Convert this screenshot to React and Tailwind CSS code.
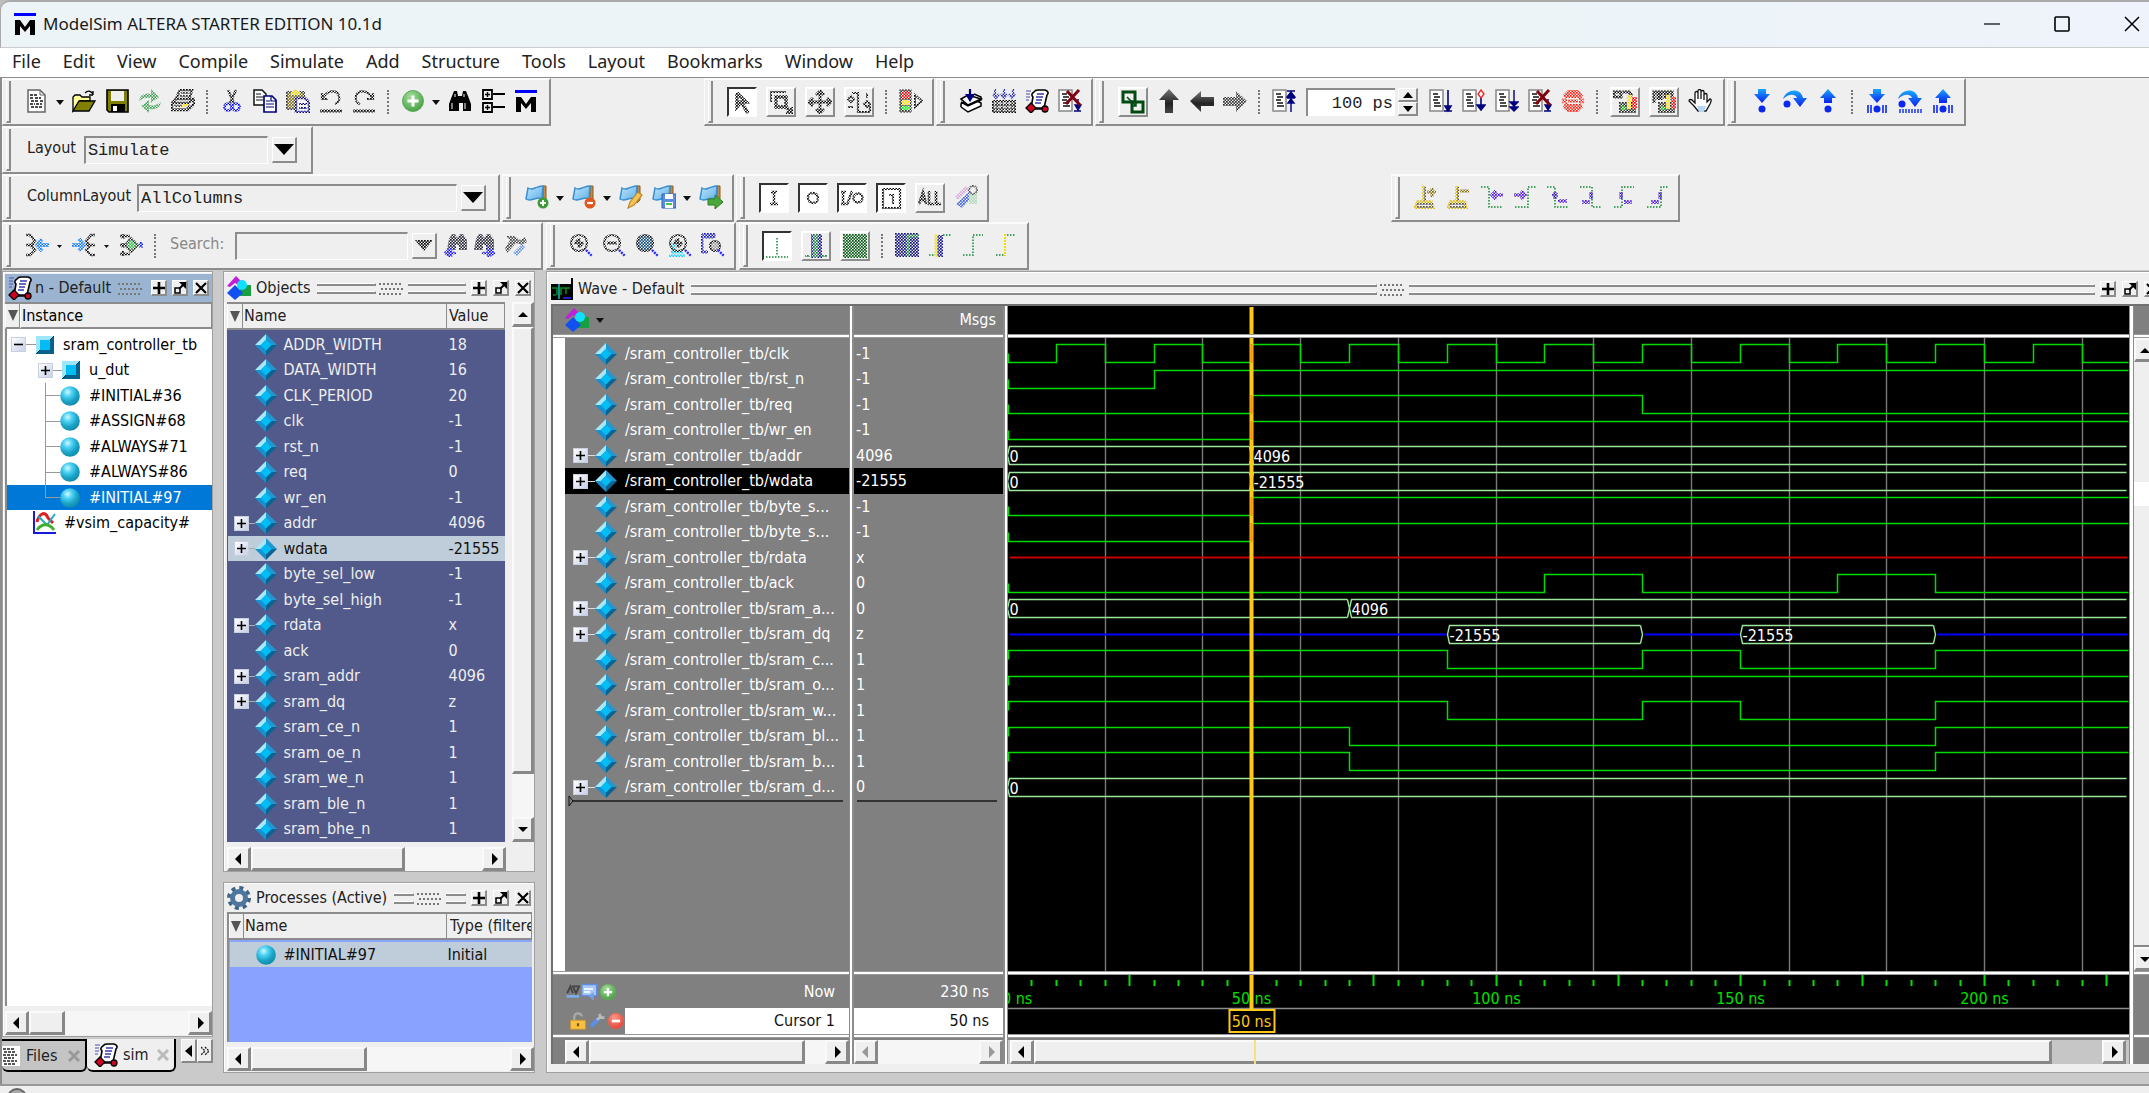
import React from "react";

/* ---------- drawing helpers ---------- */

function Defs() {
  return (
    <svg className="absolute h-0 w-0" aria-hidden="true">
      <defs>
        <pattern id="checker" width="3" height="3" patternUnits="userSpaceOnUse">
          <rect width="1.7" height="1.7" fill="#fff" />
          <rect x="1.5" y="1.5" width="1.5" height="1.5" fill="#fff" />
        </pattern>
        <mask id="stipple" maskUnits="userSpaceOnUse" x="0" y="0" width="32" height="32">
          <rect width="32" height="32" fill="url(#checker)" />
        </mask>
        <radialGradient id="ball" cx="0.38" cy="0.3" r="0.75">
          <stop offset="0" stopColor="#d4f7ff" />
          <stop offset="0.3" stopColor="#4ed3f5" />
          <stop offset="0.65" stopColor="#1ba3c6" />
          <stop offset="1" stopColor="#0f87a8" />
        </radialGradient>
        <radialGradient id="greenBall" cx="0.4" cy="0.3" r="0.8">
          <stop offset="0" stopColor="#a6dc9c" />
          <stop offset="1" stopColor="#3c9a3a" />
        </radialGradient>
        <radialGradient id="redBall" cx="0.4" cy="0.3" r="0.8">
          <stop offset="0" stopColor="#ff9a8a" />
          <stop offset="1" stopColor="#dc3a2e" />
        </radialGradient>
        <linearGradient id="flag" x1="0" y1="0" x2="1" y2="1">
          <stop offset="0" stopColor="#bfe6fc" />
          <stop offset="1" stopColor="#5fb0e8" />
        </linearGradient>
        <linearGradient id="blueArrow" x1="0" y1="0" x2="0" y2="1">
          <stop offset="0" stopColor="#1aa8ff" />
          <stop offset="1" stopColor="#0a20f0" />
        </linearGradient>
        <linearGradient id="darkArrow" x1="0" y1="0" x2="0" y2="1">
          <stop offset="0" stopColor="#777" />
          <stop offset="0.6" stopColor="#222" />
          <stop offset="1" stopColor="#444" />
        </linearGradient>
      </defs>
    </svg>
  );
}

function Svg({ children, off, w = 24, h = 24, vb }) {
  return (
    <svg width={w} height={h} viewBox={vb || "0 0 24 24"} fill="none" className="block shrink-0" aria-hidden="true">
      <g mask={off ? "url(#stipple)" : undefined}>{children}</g>
    </svg>
  );
}

const NAVY = "#00007f";

const MLogo = () => (
  <Svg>
    <rect x="1" y="1" width="22" height="3" fill="#0000ff" />
    <path d="M2 23V8h5l5 7 5-7h5v15h-5v-9l-5 6-5-6v9z" fill="#000" />
  </Svg>
);
const DocIcon = () => (
  <Svg>
    <path d="M3 1h12l5 5v17H3z" fill="#fff" stroke="#666" strokeWidth="1.5" />
    <path d="M15 1v5h5" stroke="#666" />
    <path d="M5 6h7M5 9h3m2 0h6M6 12h8m1 0h3M5 15h5m1 0h6M6 18h7m1 0h3" stroke="#111" strokeWidth="1.6" strokeDasharray="3 1" />
  </Svg>
);
const OpenIcon = () => (
  <Svg>
    <path d="M1 22V8l2-2h5l2 2h8v4H8z" fill="#ffff9c" stroke="#000" strokeWidth="1.3" />
    <path d="M1 22l6-10h16l-6 10z" fill="#808000" stroke="#000" strokeWidth="1.3" />
    <path d="M13 4c3-3 6-2 8 1m0 1V2m0 4h-4" stroke="#000" strokeWidth="1.3" />
  </Svg>
);
const SaveIcon = () => (
  <Svg>
    <path d="M2 1h21v22H4l-2-2z" fill="#808000" stroke="#000" strokeWidth="1.6" />
    <rect x="6" y="2" width="13" height="10" fill="#efefef" />
    <rect x="6" y="15" width="14" height="8" fill="#000" />
    <rect x="8" y="17" width="4" height="5" fill="#fff" />
  </Svg>
);
const RefreshIcon = () => (
  <Svg off>
    <path d="M1 12c1-6 6-9 12-7V0l8 8-8 6v-5c-5-1-8 0-12 3zM23 13c-1 6-6 8-12 7v4l-8-7 8-6v5c5 1 8 0 12-3z" fill="#3aa050" />
  </Svg>
);
const PrintIcon = () => (
  <Svg off>
    <path d="M9 1h12l-3 9H5zM5 10l-4 4v7h16l6-6v-5h-5M1 14h16v7M17 14l6-4" stroke="#000" strokeWidth="2.6" />
    <path d="M10 4h8M9 7h8M3 17h13M3 20h12" stroke="#333" strokeWidth="2" />
    <rect x="11" y="15" width="6" height="3" fill="#ffe000" />
  </Svg>
);
const CutIcon = () => (
  <Svg off>
    <path d="M8 1l6 13M16 1l-6 13" stroke="#000" strokeWidth="2.4" />
    <circle cx="8" cy="18" r="3.5" stroke="#0000ff" strokeWidth="2.6" />
    <circle cx="16" cy="18" r="3.5" stroke="#0000ff" strokeWidth="2.6" />
  </Svg>
);
const CopyIcon = () => (
  <Svg>
    <path d="M1 1h8l4 4v11H1z" fill="#fff" stroke="#111" strokeWidth="1.5" />
    <path d="M3 5h5M3 8h7M3 11h7" stroke="#111" strokeWidth="1.2" />
    <path d="M11 7h8l4 4v12H11z" fill="#fff" stroke={NAVY} strokeWidth="1.7" />
    <path d="M18 7v5h5M13 12h4M13 15h8M13 18h8" stroke={NAVY} strokeWidth="1.2" />
  </Svg>
);
const PasteIcon = () => (
  <Svg off>
    <path d="M1 3h17v17H1z" fill="#7a6a10" stroke="#333" strokeWidth="2" />
    <path d="M5 3l4-3 5 3v3H5z" fill="#e8e000" />
    <path d="M10 9h9l4 4v10H10z" fill="#fff" stroke={NAVY} strokeWidth="2.6" />
    <path d="M13 15h8M13 19h8" stroke={NAVY} strokeWidth="2" />
  </Svg>
);
const UndoIcon = () => (
  <Svg off>
    <path d="M3 4v6h6M4 9c4-8 14-9 16-2 1 4-1 7-4 8" stroke="#000" strokeWidth="2.2" />
    <path d="M1 22h22" stroke="#000" strokeWidth="3" />
  </Svg>
);
const RedoIcon = () => (
  <Svg off>
    <path d="M21 4v6h-6M20 9C16 1 6 0 4 7c-1 4 1 7 4 8" stroke="#000" strokeWidth="2.2" />
    <path d="M1 22h22" stroke="#000" strokeWidth="3" />
  </Svg>
);
const AddBall = ({ s = 24 }) => (
  <Svg w={s} h={s}>
    <circle cx="12" cy="12" r="10.5" fill="url(#greenBall)" stroke="#5fae5a" />
    <path d="M12 6.500v11M6.500 12h11" stroke="#fff" strokeWidth="3" />
  </Svg>
);
const RemoveBall = ({ s = 18 }) => (
  <Svg w={s} h={s}>
    <circle cx="12" cy="12" r="10.500" fill="url(#redBall)" stroke="#e0655a" />
    <path d="M6.500 12h11" stroke="#fff" strokeWidth="3.500" />
  </Svg>
);
const FindIcon = () => (
  <Svg>
    <path d="M4 7l2-5h3l1 5h4l1-5h3l2 5 3 8v7h-8v-8h-4v8H1v-7z" fill="#000" />
    <path d="M4 14v6M7 5v3M17 14v6M16 5v3" stroke="#fff" strokeWidth="1" />
  </Svg>
);
const TreeIcon = () => (
  <Svg>
    <path d="M2 1h9v9H2zM2 14h9v9H2zM12 5h12M12 18h12" stroke="#000" strokeWidth="1.8" />
    <path d="M6.500 3v5M4 5.500h5M6.500 16v5M4 18.500h5" stroke="#000" strokeWidth="1.4" />
  </Svg>
);
const PointerIcon = () => (
  <Svg off>
    <path d="M7 3l9 9h-5l7 11M7 3v14l4-5" stroke="#000" strokeWidth="3.400" />
  </Svg>
);
const ZoomBoxIcon = () => (
  <Svg off>
    <path d="M2 12V2h15" stroke="#000" strokeWidth="2" />
    <path d="M7 7h10v10H7zM16 16l7 7m0-6v6h-6" stroke="#000" strokeWidth="3.400" />
  </Svg>
);
const PanIcon = () => (
  <Svg off>
    <path d="M12 1v22M1 12h22M8 5l4-4 4 4M8 19l4 4 4-4M5 8l-4 4 4 4M19 8l4 4-4 4" stroke="#000" strokeWidth="2.800" />
  </Svg>
);
const EditWaveIcon = () => (
  <Svg off>
    <path d="M5 3h6v19h12M23 22v-6" stroke="#000" strokeWidth="2.200" />
    <path d="M1 9l3-3 3 3-3 3zM17 14l3-3 3 3-3 3zM1 17h5M20 3v5" stroke="#000" strokeWidth="2" />
  </Svg>
);
const TrafficIcon = () => (
  <Svg off>
    <rect x="1" y="1" width="11" height="22" fill="#333" stroke="#000" />
    <rect x="3" y="2" width="8" height="8" fill="#ff0000" />
    <rect x="3" y="11" width="8" height="5" fill="#ffe000" />
    <rect x="3" y="17" width="8" height="4" fill="#00ff00" />
    <path d="M16 6v12l7-6z" stroke="#000" strokeWidth="2" />
  </Svg>
);
const CompileIcon = () => (
  <Svg>
    <path d="M2 18l7 5 13-6v-3l-8-4M2 18v-3l6-4M2 13l7 4 13-6V8l-7-3" fill="#fff" stroke="#000" strokeWidth="1.500" />
    <path d="M2 10l7-4 13 4-13 6z" fill="#fff" stroke="#000" strokeWidth="1.500" />
    <path d="M11 0v9M8 6l3 5 3-5z" stroke={NAVY} fill={NAVY} strokeWidth="2.200" />
  </Svg>
);
const CompileAllIcon = () => (
  <Svg off>
    <path d="M3 0v7M12 0v7M21 0v7M1 5l3 4 3-4M9 5l3 4 3-4M17 5l3 4 3-4" stroke="#2020c0" strokeWidth="2.200" />
    <path d="M1 12h22v11H1z" fill="#aaa" stroke="#000" strokeWidth="2" />
    <path d="M1 16h22M1 20h22M5 12v11M10 12v11M15 12v11M20 12v11" stroke="#000" strokeWidth="1.500" />
  </Svg>
);
const SimIcon = ({ s = 24 }) => (
  <Svg w={s} h={s}>
    <path d="M1 2h5M1 5h4M1 8h4M1 11h3" stroke="#5050b0" strokeWidth="1" />
    <path d="M9 3c1-2 2-2 4-2h7c3 1 4 3 2 5l-3 13H6L8 8C6 6 7 4 9 3z" fill="#fff" stroke="#000" strokeWidth="1.600" />
    <path d="M12 5h7M11 8h7M11 11h6M10 14h6" stroke="#3838a8" strokeWidth="1.400" />
    <path d="M1 19l5-5 5 5-5 5z" fill="#d00020" stroke="#000" strokeWidth="1.300" />
    <circle cx="20" cy="20" r="3" fill="#d00020" stroke="#000" strokeWidth="1.300" />
    <path d="M10 20h7" stroke="#000" strokeWidth="1.500" />
  </Svg>
);
const StepDoc = ({ children }) => (
  <Svg>
    <path d="M1 1h13v21H1z" fill="#fff" stroke="#888" strokeWidth="1.500" />
    <path d="M4 5h5M5 8h6M4 11h5M5 14h6M5 17h7" stroke="#111" strokeWidth="1.500" />
    {children}
  </Svg>
);
const RestartIcon = () => (
  <StepDoc>
    <path d="M19 23V3M15 2h8M15 9h8M15 8l4-5 4 5zM16 14l3-4 3 4z" stroke={NAVY} fill={NAVY} strokeWidth="1.400" />
  </StepDoc>
);
const RunIcon = () => (
  <StepDoc>
    <path d="M19 1v18M15 22h8M16 17l3 5 3-5z" stroke={NAVY} fill={NAVY} strokeWidth="1.600" />
  </StepDoc>
);
const ContinueIcon = () => (
  <StepDoc>
    <path d="M19 8v12M15 16l4 5 4-5z" stroke={NAVY} fill={NAVY} strokeWidth="1.600" />
    <path d="M19 1l3 4-3 4-3-4z" stroke="#f02020" strokeWidth="1.300" fill="#fff" />
  </StepDoc>
);
const RunAllIcon = () => (
  <StepDoc>
    <path d="M19 1v20M15 13l4 4 4-4zM15 18l4 4 4-4z" stroke={NAVY} fill={NAVY} strokeWidth="1.400" />
  </StepDoc>
);
const BreakIcon = () => (
  <StepDoc>
    <path d="M20 10v10M16 22h7M17 16l3 5 3-5z" stroke={NAVY} fill={NAVY} strokeWidth="1.400" />
    <path d="M9 2l13 14M21 1L8 15" stroke="#800010" strokeWidth="3" />
  </StepDoc>
);
const StopIcon = () => (
  <Svg off>
    <path d="M7 1h10l5 5-3 6 3 6-5 5H7l-5-5 3-6-3-6z" fill="#ff2010" />
    <path d="M6 9h12v6H6z" fill="#efefef" />
    <path d="M1 10l3 2-3 2M23 10l-3 2 3 2" stroke="#ff2010" strokeWidth="2" />
    <path d="M7 12h10M12 4v4M12 16v4" stroke="#ff2010" strokeWidth="3" />
  </Svg>
);
const CascadeIcon = () => (
  <Svg>
    <path d="M2 2h12v10H2z" stroke="#004b12" strokeWidth="3" />
    <path d="M11 12h11v10H11z" stroke="#004b12" strokeWidth="3" />
    <path d="M6 7l9 9m0-5v5h-5" stroke="#004b12" strokeWidth="1.500" />
  </Svg>
);
const UpArrow = () => (
  <Svg><path d="M12 0l10 11h-6v13H8V11H2z" fill="url(#darkArrow)" /></Svg>
);
const LeftArrow = () => (
  <Svg><path d="M0 12L11 2v6h13v9H11v6z" fill="url(#darkArrow)" /></Svg>
);
const RightArrowOff = () => (
  <Svg off><path d="M24 12L13 2v6H0v9h13v6z" fill="#333" /></Svg>
);
const ProfileIcon = ({ m }) => (
  <Svg off>
    <path d={m ? "M2 13V2h4v8m3 0V2h4v7m3 0V2h4v8" : "M1 8V2h7v5H2m8-5h6l3 4"} stroke="#000" strokeWidth="3" />
    <path d="M6 12h17v11H6z" fill="#222" />
    <path d="M14 5h4v14h-4z" fill="#ffe000" />
    <path d="M19 7h5v12h-5z" fill="#ff0000" />
    <path d="M9 15l5 4-5 2z" fill="#00d000" />
  </Svg>
);
const HandIcon = () => (
  <Svg>
    <path d="M7 14V4c0-2 3-2 3 0v6V2c0-2 3-2 3 0v8V3c0-2 3-2 3 0v8V6c0-2 3-2 3 0v7l3-3c2 0 1 3 0 5l-4 7H10l-4-5-5-5c0-2 3-2 4 0z" fill="#fff" stroke="#111" strokeWidth="1.300" />
    <path d="M9 17h9l-2 6h-5z" fill="#b8d4f4" />
  </Svg>
);
const StepDown = ({ bars }) => (
  <Svg>
    <path d="M8 0h8v5h4l-8 9-8-9h4z" fill="url(#blueArrow)" />
    <circle cx="12" cy="20" r="3.500" fill="#0a28f0" />
    {bars && <path d="M3 16v8M6 16v8M18 16v8M21 16v8" stroke="#0a28f0" strokeWidth="1.600" />}
  </Svg>
);
const StepUp = ({ bars }) => (
  <Svg>
    <path d="M8 14h8V9h4l-8-9-8 9h4z" fill="url(#blueArrow)" />
    <circle cx="12" cy="20" r="3.500" fill="#0a28f0" />
    {bars && <path d="M3 16v8M6 16v8M18 16v8M21 16v8" stroke="#0a28f0" strokeWidth="1.600" />}
  </Svg>
);
const StepOver = ({ bars }) => (
  <Svg>
    <path d="M0 10C4-1 18-1 20 9h4l-7 9-7-9h4C12 4 5 5 0 10z" fill="url(#blueArrow)" />
    <circle cx="4" cy="15" r="3.500" fill="#0a28f0" />
    {bars && <path d="M2 20v4M5 20v4M8 20v4M11 20v4M14 20v4M17 20v4M20 20v4M23 20v4" stroke="#0a28f0" strokeWidth="1.400" />}
  </Svg>
);
const FlagIcon = ({ kind }) => (
  <Svg>
    <path d="M18 1h3v14l-3 3z" fill="#c08a48" stroke="#8a5c20" />
    <path d="M3 3c3 2 4 1 7 0s5-2 8-2l-1 12c-3 0-5 0-8 1s-5 2-8 0z" fill="url(#flag)" stroke="#3a8fd0" strokeWidth="1.500" />
    {kind === "add" && <g><circle cx="18" cy="18" r="5.500" fill="#3d9a38" /><path d="M18 15v6M15 18h6" stroke="#fff" strokeWidth="2" /></g>}
    {kind === "remove" && <g><circle cx="18" cy="18" r="5.500" fill="#e0561e" /><path d="M15 18h6" stroke="#fff" strokeWidth="2.200" /></g>}
    {kind === "edit" && <path d="M9 23l2-6 8-10 4 3-8 10z" fill="#f4c552" stroke="#c0862a" strokeWidth="1.200" />}
    {kind === "save" && <g><path d="M10 9h14v14H10z" fill="#5b8ee0" stroke="#2f5fb8" /><path d="M13 9h8v5h-8zM13 17h8v6h-8z" fill="#fff" /><path d="M14 19h6" stroke="#4ac04a" strokeWidth="2" /></g>}
    {kind === "go" && <path d="M9 14h7v-4l8 7-8 7v-4H9z" fill="#4aa83a" stroke="#2d7f22" />}
  </Svg>
);
const GlyphI = () => <Svg off><path d="M9 6h6M12 6v12M8 18h8" stroke="#000" strokeWidth="2.400" /></Svg>;
const GlyphO = () => <Svg off><circle cx="12" cy="12" r="5" stroke="#000" strokeWidth="2.400" /></Svg>;
const GlyphIO = () => <Svg off><path d="M1 6h5M3 6v12M1 18h5M7 19l5-14" stroke="#000" strokeWidth="2.400" /><circle cx="18" cy="12" r="4.500" stroke="#000" strokeWidth="2.400" /></Svg>;
const GlyphBox = () => <Svg off><path d="M4 3h17v19H4zM10 9h4v9" stroke="#000" strokeWidth="2.200" /></Svg>;
const GlyphAll = () => <Svg off><path d="M1 18l4-12 3 12M2 14h6M11 5v13h5M18 5v13h5" stroke="#000" strokeWidth="2.600" /></Svg>;
const BrushIcon = () => (
  <Svg off>
    <path d="M1 12L12 1l3 3L4 15z" fill="#d8a0d8" />
    <path d="M2 19l14-13 4 4L8 23z" fill="#3a5fe0" />
    <path d="M15 9h8v10h-8z" fill="#a8d8b0" />
    <circle cx="19" cy="5" r="4" stroke="#444" strokeWidth="2" />
  </Svg>
);
const WrenchOff = () => (
  <Svg off>
    <path d="M2 3h8l6 4 5-3 2 5-5 3-6-2-9 10-2-5 5-8z" fill="#444" />
    <path d="M9 20l9-9 3 3-8 9z" fill="#5a8fe8" />
  </Svg>
);
const CursorAdd = ({ plus }) => (
  <Svg off>
    <path d="M10 1v15M1 23h18l-2-6H4z" stroke="#e0b800" strokeWidth="3.600" />
    <path d="M2 19h17M3 22h16M11 2v14" stroke="#333" strokeWidth="1.500" />
    <path d={plus ? "M13 7h9M18 3v9" : "M13 6h9"} stroke="#806a00" strokeWidth="3" />
  </Svg>
);
const EdgeIcon = ({ d, arrow }) => (
  <Svg>
    <path d={d} stroke="#118833" strokeWidth="1.500" strokeDasharray="1.500 1.500" />
    <g mask="url(#stipple)"><path d={arrow} stroke="#4a10e0" strokeWidth="3.400" /></g>
  </Svg>
);
const JoinIcon = ({ kind }) => (
  <Svg off>
    {kind === "in" && <path d="M1 2h4l5 6-5 5M1 12h8M1 22h4l5-5-4-4" stroke="#000" strokeWidth="2.400" />}
    {kind === "in" && <path d="M12 12h12M17 6l-5 6 5 6" stroke="#0a78ff" strokeWidth="3.800" />}
    {kind === "out" && <path d="M23 2h-4l-5 6 4 5M23 12h-9M23 22h-4l-5-5 4-4" stroke="#000" strokeWidth="2.400" />}
    {kind === "out" && <path d="M0 12h12M7 6l5 6-5 6" stroke="#0a78ff" strokeWidth="3.800" />}
    {kind === "mid" && <path d="M1 3h10M1 12h6M1 21h10M4 1v5M4 10v5M4 18v5" stroke="#000" strokeWidth="2.600" />}
    {kind === "mid" && <path d="M12 5l7 7-7 7-6-7z" fill="#28c040" stroke="#222" strokeWidth="2" />}
    {kind === "mid" && <path d="M20 12h4M22 9v6" stroke="#0020ff" strokeWidth="3" />}
  </Svg>
);
const FindOff = ({ flip }) => (
  <Svg off>
    <path d="M5 6l3-5h3l2 4 3-4h3l4 6v10h-8v-5h-3v5H3z" fill="#223" />
    <path d={flip ? "M11 20h8M17 15l6 5-6 4z" : "M12 20H4M7 15l-6 5 6 4z"} stroke="#1010ff" fill="#1010ff" strokeWidth="2.500" />
  </Svg>
);
const LensIcon = ({ kind }) => (
  <Svg>
    <g mask="url(#stipple)">
      {kind === "box" && <path d="M1 1h12v4M1 1v18h6M3 4h10" stroke="#1818c0" strokeWidth="3" />}
      {kind === "cursor" && <path d="M1 23h16M3 19h12M6 10v10" stroke="#00d0ff" strokeWidth="3" />}
      <circle cx={kind === "box" ? 14 : 10} cy={kind === "box" ? 13 : 10} r={kind === "box" ? 5 : 8} fill={kind === "fit" ? "#0a4a80" : kind === "box" ? "#999" : "none"} stroke="#000" strokeWidth="2.200" />
      {kind === "in" && <path d="M10 5v10M5 10h10M7 7l6 6" stroke="#000" strokeWidth="2.600" />}
      {kind === "out" && <path d="M5 10h10" stroke="#000" strokeWidth="3" />}
      {kind === "cursor" && <path d="M10 5v10M5 10h10M7 7l6 6" stroke="#000" strokeWidth="2.600" />}
    </g>
    <path d="M17 17l6 6" stroke="#2a2aff" strokeWidth="2.400" strokeDasharray="2 1" />
  </Svg>
);
const WaveBtn = ({ kind }) => (
  <Svg>
    {kind === "line" && <path d="M12 4v18M1 23h22" stroke="#118833" strokeWidth="1.500" strokeDasharray="1.500 1.500" />}
    <g mask="url(#stipple)">
      {kind === "bar" && <path d="M7 0h11v24H7z" fill="#101090" />}
      {kind === "bar" && <path d="M10 0h3v24h-3zM1 22h5M18 22h5" fill="#118833" stroke="#118833" strokeWidth="2" />}
      {kind === "full" && <path d="M0 0h24v24H0z" fill="#005a10" />}
      {kind === "blue" && <path d="M0 0h24v24H0z" fill="#101080" />}
      {kind === "blue" && <path d="M13 24V3h11" stroke="#118833" strokeWidth="2.500" />}
      {kind === "half" && <path d="M9 2h6v22H9z" fill="#101090" />}
      {kind === "half" && <path d="M8 1v23" stroke="#f0e000" strokeWidth="3" />}
    </g>
    {kind === "half" && <path d="M1 22h6M15 2h8" stroke="#118833" strokeWidth="1.500" strokeDasharray="1.500 1.500" />}
    {kind === "edge" && <path d="M2 22h10V2h10" stroke="#118833" strokeWidth="1.500" strokeDasharray="1.500 1.500" />}
    {kind === "edgey" && <path d="M2 22h8M13 2h9" stroke="#118833" strokeWidth="1.500" strokeDasharray="1.500 1.500" />}
    {kind === "edgey" && <path d="M11 1v22" stroke="#f0e000" strokeWidth="2" strokeDasharray="2 1" />}
  </Svg>
);
const Diamond = () => (
  <svg width="22" height="22" viewBox="0 0 22 22" className="block shrink-0" aria-hidden="true">
    <path d="M11 0L0 11h6l5-5z" fill="#a5e8fa" />
    <path d="M11 0l11 11h-6l-5-5z" fill="#2196cf" />
    <path d="M0 11l11 11v-6l-5-5z" fill="#1790d0" />
    <path d="M22 11L11 22v-6l5-5z" fill="#0a6391" />
    <path d="M11 5.500l5.500 5.500-5.500 5.500L5.500 11z" fill="#00bdf5" />
  </svg>
);
const Ball = () => (
  <svg width="20" height="20" viewBox="0 0 20 20" className="block shrink-0" aria-hidden="true">
    <circle cx="10" cy="10" r="9.800" fill="url(#ball)" />
  </svg>
);
const Block = () => (
  <svg width="18" height="18" viewBox="0 0 18 18" className="block shrink-0" aria-hidden="true">
    <path d="M0 0h18L0 18z" fill="#9fe6fa" />
    <path d="M18 0v18H0z" fill="#07618a" />
    <path d="M4 4h10v10H4z" fill="#00bdf5" />
    <path d="M14 4l4-4M4 14l-4 4" stroke="#063a55" />
  </svg>
);
const ShapesIcon = () => (
  <svg width="24" height="24" viewBox="0 0 24 24" className="block shrink-0" aria-hidden="true">
    <path d="M9 0l7 7-3 3-5-3-5 4-3-1z" fill="#c020d8" />
    <path d="M13 9h11v11H13z" fill="#18a040" />
    <path d="M8 9l8 8-8 7-8-7z" fill="#1050f0" />
    <circle cx="15" cy="9" r="5" fill="#10e0ff" />
  </svg>
);
const CapacityIcon = () => (
  <svg width="24" height="24" viewBox="0 0 24 24" fill="none" className="block shrink-0" aria-hidden="true">
    <path d="M2 0v22h22" stroke="#1818e0" strokeWidth="2" />
    <path d="M5 11c2-8 8-12 11-4l5 5" stroke="#e02020" strokeWidth="3" />
    <path d="M6 5l9 9 8-11" stroke="#20a8c8" strokeWidth="2" />
    <path d="M5 19c5-7 12-7 17 0" stroke="#40b030" strokeWidth="3" />
  </svg>
);
const GearIcon = () => (
  <svg width="24" height="24" viewBox="0 0 24 24" fill="none" className="block shrink-0" aria-hidden="true">
    <circle cx="12" cy="12" r="10" stroke="#3f6488" strokeWidth="4" strokeDasharray="4 3.850" />
    <circle cx="12" cy="12" r="6.500" stroke="#4f779e" strokeWidth="5" />
  </svg>
);
const WaveIcon = () => (
  <svg width="22" height="22" viewBox="0 0 22 22" fill="none" className="block shrink-0" aria-hidden="true">
    <path d="M0 0h22v22H0z" fill="#000" />
    <path d="M0 0h20v6H0z" fill="#eee" />
    <path d="M1 10h5v7M10 17v-7h9M2 17h3M15 10v6" stroke="#0a8a20" strokeWidth="1.500" />
    <path d="M8 6v15" stroke="#10c0c0" strokeWidth="1.500" />
    <path d="M12 20h8" stroke="#2020c0" strokeWidth="2" />
  </svg>
);

/* ---------- toolbar pieces ---------- */

function Toolbar({ children, className = "", label }) {
  return (
    <div role="toolbar" aria-label={label} className={`flex h-[48px] shrink-0 items-center border-t-2 border-r-2 border-b-2 border-l border-t-[#fbfbfb] border-l-[#fbfbfb] border-r-[#8c8c8c] border-b-[#8c8c8c] bg-[#efefef] pr-[5px] ${className}`}>
      <div className="mr-[9px] ml-[3px] h-[42px] w-[5px] shrink-0 border-r-2 border-b-2 border-l border-[#8c8c8c] border-l-white" />
      {children}
    </div>
  );
}
const Tool = ({ label, children }) => (
  <button type="button" aria-label={label} className="mb-[2px] flex h-[30px] w-[33px] shrink-0 items-center justify-center">{children}</button>
);
const Narrow = ({ label, children }) => (
  <button type="button" aria-label={label} className="mb-[2px] flex h-[30px] w-[27px] shrink-0 items-center justify-center">{children}</button>
);
const Raised = ({ label, children }) => (
  <div className="flex w-[39px] shrink-0 justify-center">
    <button type="button" aria-label={label} className="flex h-[30px] w-[30px] items-center justify-center border-2 border-t-white border-r-[#8c8c8c] border-b-[#8c8c8c] border-l-white bg-[#efefef]">{children}</button>
  </div>
);
const Pressed = ({ label, children }) => (
  <div className="flex w-[39px] shrink-0 justify-center">
    <button type="button" aria-label={label} aria-pressed="true" className="flex h-[30px] w-[30px] items-center justify-center border-2 border-t-[#333] border-r-white border-b-white border-l-[#333] bg-white">{children}</button>
  </div>
);
const Caret = ({ small, label = "More" }) => (
  <button type="button" aria-label={label} className="flex h-[30px] w-[14px] shrink-0 items-center justify-center">
    <svg width="8" height="5" viewBox="0 0 8 5" aria-hidden="true"><path d={small ? "M1 1h5l-2.500 3z" : "M0 0h8L4 5z"} fill="#111" /></svg>
  </button>
);
const Sep = () => (
  <div className="flex w-[16px] shrink-0 justify-center">
    <div className="h-[24px] border-l-2 border-dotted border-[#777]" />
  </div>
);

function Combo({ value, width, off, label }) {
  return (
    <div className="flex items-center">
      <input aria-label={label} defaultValue={value} disabled={off} className={`h-[28px] border-t-2 border-l-2 border-r border-b border-t-[#8c8c8c] border-l-[#8c8c8c] border-r-white border-b-white bg-[#efefef] pl-[2px] font-['Liberation_Mono',monospace] text-[17px] text-[#222] outline-none ${width}`} />
      <button type="button" aria-label={`${label} list`} className="ml-[4px] flex h-[26px] w-[25px] items-center justify-center border-r-2 border-b-2 border-l border-t border-t-white border-l-white border-r-[#8c8c8c] border-b-[#8c8c8c]">
        {off
          ? <Svg w={18} h={11} vb="0 0 18 11" off><path d="M0 0h18L9 11z" fill="#000" /></Svg>
          : <svg width="20" height="11" viewBox="0 0 20 11" aria-hidden="true"><path d="M0 0h20L10 11z" fill="#000" /></svg>}
      </button>
    </div>
  );
}

/* ---------- panel pieces ---------- */

const Dots = () => (
  <svg width="26" height="13" viewBox="0 0 26 13" className="shrink-0" aria-hidden="true">
    {[1, 6, 11].map((y, r) =>
      [0, 1, 2, 3, 4, 5].map((i) => <rect key={`${r}-${i}`} x={i * 4 + (r % 2 ? 2 : 0)} y={y} width="2" height="2" fill="#777" />)
    )}
  </svg>
);
const Lines = () => (
  <div className="flex h-[11px] min-w-0 flex-1 flex-col justify-between">
    <div className="h-[3px] border-t border-r border-b-2 border-t-white border-r-[#8c8c8c] border-b-[#8c8c8c]" />
    <div className="h-[3px] border-t border-r border-b-2 border-t-white border-r-[#8c8c8c] border-b-[#8c8c8c]" />
  </div>
);
const MiniButton = ({ label, children }) => (
  <button type="button" aria-label={label} className="flex h-[16px] w-[16px] shrink-0 items-center justify-center border-t border-r-2 border-b-2 border-l border-t-white border-l-white border-r-[#8c8c8c] border-b-[#8c8c8c] bg-[#efefef]">
    <svg width="12" height="12" viewBox="0 0 12 12" fill="none" stroke="#000" aria-hidden="true">{children}</svg>
  </button>
);
const PanelButtons = ({ tight }) => (
  <div className={`flex shrink-0 ${tight ? "gap-[5px]" : "gap-[6px]"}`}>
    <MiniButton label="Zoom pane"><path d="M6 0v12M0 6h12" strokeWidth="2.600" /></MiniButton>
    <MiniButton label="Undock"><path d="M1 6h5v5H1z" strokeWidth="1.500" /><path d="M5 7l4-4" strokeWidth="2" /><path d="M5 0h7v7z" fill="#000" stroke="none" /></MiniButton>
    <MiniButton label="Close"><path d="M1 1l10 10M11 1L1 11" strokeWidth="2.200" /></MiniButton>
  </div>
);
function PanelTitle({ icon, title, active, className = "" }) {
  return (
    <div className={`flex h-[28px] shrink-0 items-center px-[3px] text-[16px] whitespace-nowrap text-[#222] ${active ? "gap-[3px] bg-[#9ab4d2]" : "gap-[5px] bg-[#efefef]"} ${className}`}>
      {icon}
      <h2>{title}</h2>
      {active
        ? <div className="flex min-w-0 flex-1 justify-center overflow-hidden"><Dots /></div>
        : <div className="ml-[2px] flex flex-1 items-center gap-[3px]"><Lines /><Dots /><Lines /></div>}
      <PanelButtons tight={active} />
    </div>
  );
}
const SortArrow = () => (
  <svg width="10" height="11" viewBox="0 0 10 11" aria-hidden="true"><path d="M0 0h10L5 11z" fill="#555" /></svg>
);
const PANEL = "border border-[#a0a0a0] bg-[#efefef] shadow-[inset_1px_1px_0_#fff]";
const HEAD = "border-r border-b-2 border-l border-[#8c8c8c] border-l-white bg-[#efefef]";
const TRACK = "bg-[#f6f6f6]";
const THUMB = "border-t-2 border-l-2 border-r-[3px] border-b-[3px] border-t-[#fafafa] border-l-[#fafafa] border-r-[#888] border-b-[#888] bg-[#efefef]";
const TAB_NAV = "flex h-[24px] w-[16px] shrink-0 items-center justify-center border-t border-r-2 border-b-2 border-l border-t-white border-l-white border-r-[#888] border-b-[#888] bg-[#efefef]";

const ARROWS = {
  left: "M9 1v12L3 7z",
  right: "M5 1v12l6-6z",
  up: "M2 10h10L7 5z",
  down: "M2 5h10L7 10z",
};
const ScrollButton = ({ dir, off, className = "" }) => (
  <button type="button" aria-label={`Scroll ${dir}`} className={`flex shrink-0 items-center justify-center ${THUMB} ${className}`}>
    <svg width="14" height="14" viewBox="0 0 14 14" className="shrink-0" aria-hidden="true"><path d={ARROWS[dir]} fill={off ? "#999" : "#000"} /></svg>
  </button>
);
function HScroll({ thumb, className = "", off, track = TRACK, children }) {
  return (
    <div className={`relative flex h-[24px] shrink-0 ${track} ${className}`}>
      <ScrollButton dir="left" off={off} className="w-[24px]" />
      {thumb && <div className={`${THUMB} ${thumb}`} />}
      <div className="flex-1" />
      {children}
      <ScrollButton dir="right" off={off} className="w-[24px]" />
    </div>
  );
}
const Expander = ({ sign = "+" }) => (
  <button type="button" aria-label={sign === "+" ? "Expand" : "Collapse"} className="flex h-[15px] w-[15px] shrink-0 items-center justify-center border border-[#c8d0e0] bg-linear-to-br from-white to-[#c8d0e8]">
    <svg width="9" height="9" viewBox="0 0 9 9" aria-hidden="true"><path d={sign === "+" ? "M4.500 0v9M0 4.500h9" : "M0 4.500h9"} stroke="#000" strokeWidth="1.600" /></svg>
  </button>
);

/* ---------- data ---------- */

const MENUS = ["File", "Edit", "View", "Compile", "Simulate", "Add", "Structure", "Tools", "Layout", "Bookmarks", "Window", "Help"];

const PROCESSES = ["#INITIAL#36", "#ASSIGN#68", "#ALWAYS#71", "#ALWAYS#86", "#INITIAL#97"];

const OBJECTS = [
  ["ADDR_WIDTH", "18"], ["DATA_WIDTH", "16"], ["CLK_PERIOD", "20"], ["clk", "-1"], ["rst_n", "-1"],
  ["req", "0"], ["wr_en", "-1"], ["addr", "4096", true], ["wdata", "-21555", true], ["byte_sel_low", "-1"],
  ["byte_sel_high", "-1"], ["rdata", "x", true], ["ack", "0"], ["sram_addr", "4096", true], ["sram_dq", "z", true],
  ["sram_ce_n", "1"], ["sram_oe_n", "1"], ["sram_we_n", "1"], ["sram_ble_n", "1"], ["sram_bhe_n", "1"],
];

const END = 229.4;
const CLK_EDGES = Array.from({ length: 22 }, (_, i) => (i + 1) * 10);
const P = "/sram_controller_tb/";
const SIGNALS = [
  { name: P + "clk", value: "-1", start: 0, edges: CLK_EDGES },
  { name: P + "rst_n", value: "-1", start: 0, edges: [30] },
  { name: P + "req", value: "-1", start: 0, edges: [50, 130] },
  { name: P + "wr_en", value: "-1", start: 0, edges: [50] },
  { name: P + "addr", value: "4096", bus: [[0, 50, "0"], [50, END, "4096"]] },
  { name: P + "wdata", value: "-21555", bus: [[0, 50, "0"], [50, END, "-21555"]], selected: true },
  { name: P + "byte_s...", value: "-1", start: 0, edges: [50] },
  { name: P + "byte_s...", value: "-1", start: 0, edges: [50] },
  { name: P + "rdata", value: "x", bus: [], flat: "#c80000", gaps: [[0, END]] },
  { name: P + "ack", value: "0", start: 0, edges: [110, 130, 170, 190] },
  { name: P + "sram_a...", value: "0", bus: [[0, 70, "0"], [70, END, "4096"]] },
  { name: P + "sram_dq", value: "z", bus: [[90, 130, "-21555"], [150, 190, "-21555"]], flat: "#0000ff", gaps: [[0, 90], [130, 150], [190, END]] },
  { name: P + "sram_c...", value: "1", start: 1, edges: [90, 130, 150, 190] },
  { name: P + "sram_o...", value: "1", start: 1, edges: [] },
  { name: P + "sram_w...", value: "1", start: 1, edges: [90, 130, 150, 190] },
  { name: P + "sram_bl...", value: "1", start: 1, edges: [70, 190] },
  { name: P + "sram_b...", value: "1", start: 1, edges: [70, 190] },
  { name: P + "sram_d...", value: "0", bus: [[0, END, "0"]] },
];

/* ---------- waveform drawing ---------- */

const PX_PER_NS = 4.885;
const tx = (t) => Math.round(t * PX_PER_NS) - 0.5;
const rowTop = (i) => 3 + Math.round(i * 25.5);

function Trace({ signal, i }) {
  const hi = rowTop(i) + 3.5;
  const lo = rowTop(i) + 21.5;
  const mid = rowTop(i) + 12.5;
  if (signal.bus) {
    return (
      <g>
        {(signal.gaps || []).map(([a, b]) => (
          <path key={a} d={`M${tx(a) + 2} ${mid}H${tx(b) - 1}`} stroke={signal.flat} strokeWidth="2" />
        ))}
        {signal.bus.map(([a, b, label]) => {
          const x0 = tx(a), x1 = tx(b);
          const close = b < END ? `L${x1} ${mid}L${x1 - 2} ${lo}` : `M${x1} ${lo}`;
          return (
            <g key={a}>
              <path d={`M${x1 - 2} ${hi}H${x0 + 2}L${x0} ${mid}L${x0 + 2} ${lo}H${x1 - 2}`} stroke="#9be89b" strokeWidth="1.4" fill="none" />
              <path d={`M${x1 - 2} ${hi}${close}`} stroke="#9be89b" strokeWidth="1.4" fill="none" />
              <text x={x0 + 2} y={mid + 6} fill="#fff" fontSize="16">{label}</text>
            </g>
          );
        })}
      </g>
    );
  }
  let level = signal.start;
  let d = `M0.500 ${mid}V${level ? hi : lo}`;
  for (const e of signal.edges) {
    level = 1 - level;
    d += `H${tx(e)}V${level ? hi : lo}`;
  }
  d += `H${tx(END)}`;
  return <path d={d} stroke="#00dc00" strokeWidth="1.5" fill="none" />;
}

const CURSOR = "#ffc814";
const GRID = Array.from({ length: 11 }, (_, i) => (i + 1) * 20);
const TICKS = Array.from({ length: 45 }, (_, i) => (i + 1) * 5);

function WaveCanvas() {
  return (
    <svg className="block h-full w-full" role="img" aria-label="Waveforms">
      {GRID.map((t) => <path key={t} d={`M${tx(t)} 0V2000`} stroke="#787878" strokeWidth="1.4" />)}
      {SIGNALS.map((s, i) => <Trace key={i} signal={s} i={i} />)}
      <path d={`M${tx(50)} 0V2000`} stroke={CURSOR} strokeWidth="4" />
      {[0, 2, 3, 6, 7].map((i) => <path key={i} d={`M${tx(50)} ${rowTop(i) + 3}v19`} stroke="#ff8a10" strokeWidth="2" />)}
    </svg>
  );
}

function Ruler() {
  return (
    <svg className="block h-[58px] w-full" role="img" aria-label="Time ruler">
      {TICKS.map((t) => <path key={t} d={`M${tx(t)} ${t % 25 ? 5 : 0}V11`} stroke="#00e000" strokeWidth="2" />)}
      <path d="M0 33.500H2000" stroke="#8c8c8c" strokeWidth="1.500" />
      <text x="-6" y="29" fill="#00e000" fontSize="16">0 ns</text>
      {[50, 100, 150, 200].map((t) => <text key={t} x={tx(t)} y="29" textAnchor="middle" fill="#00e000" fontSize="16">{t} ns</text>)}
      <path d={`M${tx(50)} 0V35`} stroke={CURSOR} strokeWidth="4" />
      <rect x={tx(50) - 22} y="35" width="45" height="22" fill="#000" stroke={CURSOR} strokeWidth="2" />
      <text x={tx(50)} y="52" textAnchor="middle" fill={CURSOR} fontSize="16">50 ns</text>
    </svg>
  );
}

/* ---------- panels ---------- */

function InstancePanel() {
  const row = "flex odd:h-[25px] even:h-[26px] items-center";
  return (
    <section className="flex w-[211px] shrink-0 flex-col">
      <div className={`flex min-h-0 flex-1 flex-col pt-[2px] pl-[2px] ${PANEL}`}>
        <PanelTitle active title="n - Default" icon={<SimIcon />} />
        <div className="flex h-[27px] shrink-0 border-t-2 border-[#8c8c8c] text-[16px]">
          <div className={`flex w-[15px] items-center justify-center ${HEAD}`}><SortArrow /></div>
          <div className={`flex-1 pl-[1px] leading-[24px] ${HEAD}`}>Instance</div>
        </div>
        <ul className="min-h-0 flex-1 overflow-hidden border-l-2 border-[#8c8c8c] bg-white pt-[3px] text-[16px] text-black">
          <li className={`${row} pl-[4px]`}>
            <Expander sign="-" /><span className="w-[10px] border-t border-[#999]" /><Block /><span className="ml-[9px]">sram_controller_tb</span>
          </li>
          <li className={`${row} pl-[31px]`}>
            <Expander /><span className="w-[9px] border-t border-[#999]" /><Block /><span className="ml-[9px]">u_dut</span>
          </li>
          {PROCESSES.map((p, i) => (
            <li key={p} className={`${row} relative pl-[38px] ${i === 4 ? "bg-[#0078d7] text-white" : ""}`}>
              <span className={`absolute top-0 left-[38px] border-l border-[#999] ${i === 4 ? "h-1/2" : "h-full"}`} />
              <span className="w-[15px] border-t border-[#999]" /><Ball /><span className="ml-[9px]">{p}</span>
            </li>
          ))}
          <li className={`${row} pl-[25px]`}><CapacityIcon /><span className="ml-[8px]">#vsim_capacity#</span></li>
        </ul>
        <HScroll thumb="w-[36px]" className="mt-[5px] mb-[1px]" />
      </div>
      <div className="mt-[2px] flex h-[34px] shrink-0 items-start pb-[1px] text-[16px] text-[#222]">
        <button type="button" className="flex h-full w-[85px] shrink-0 items-center rounded-b-md border-t-2 border-r-2 border-b-2 border-black bg-[#c4c4c4] pr-[5px]">
          <svg width="18" height="20" viewBox="0 0 18 20" aria-hidden="true"><path d="M0 0h18v20H0z" fill="#fff" /><path d="M1 3h12M2 6h11M1 9h14M2 12h10M1 15h14M2 18h12" stroke="#222" strokeWidth="1.400" strokeDasharray="3 1" /></svg>
          <span className="ml-[6px]">Files</span>
          <svg width="12" height="12" viewBox="0 0 12 12" className="ml-auto" aria-hidden="true"><path d="M1 1l10 10M11 1L1 11" stroke="#999" strokeWidth="3" /></svg>
        </button>
        <button type="button" className="flex h-full w-[89px] shrink-0 items-center rounded-b-md border-r-2 border-b-2 border-black bg-[#efefef] pr-[5px] pl-[7px]">
          <SimIcon /><span className="ml-[5px]">sim</span>
          <svg width="12" height="12" viewBox="0 0 12 12" className="ml-auto" aria-hidden="true"><path d="M1 1l10 10M11 1L1 11" stroke="#bbb" strokeWidth="3" /></svg>
        </button>
        <button type="button" aria-label="Previous tab" className={`ml-[5px] ${TAB_NAV}`}><svg width="7" height="12" viewBox="0 0 7 12" className="shrink-0" aria-hidden="true"><path d="M7 0v12L0 6z" fill="#000" /></svg></button>
        <button type="button" aria-label="Next tab" className={TAB_NAV}><svg width="8" height="10" viewBox="0 0 8 10" fill="none" className="shrink-0" aria-hidden="true"><path d="M0 1l4 4-4 4M4 1l4 4-4 4" stroke="#222" strokeWidth="1.400" strokeDasharray="2 1" /></svg></button>
      </div>
    </section>
  );
}

function ObjectsPanel() {
  return (
    <section className={`flex min-h-0 flex-1 flex-col pt-[2px] ${PANEL}`}>
      <PanelTitle title="Objects" icon={<ShapesIcon />} />
      <div className="flex min-h-0 flex-1 pl-[3px]">
        <div className="min-w-0 flex-1 overflow-hidden border-t-2 border-[#8c8c8c] bg-[#515a8a]">
          <table className="w-full table-fixed border-collapse text-[16px] leading-[20px]">
            <thead>
              <tr className="h-[25px] text-left text-[#222]">
                <th className={`w-[15px] pl-[2px] font-normal ${HEAD}`}><SortArrow /></th>
                <th className={`pl-[1px] font-normal ${HEAD}`}>Name</th>
                <th className={`w-[58px] pl-[2px] font-normal ${HEAD}`}>Value</th>
              </tr>
            </thead>
            <tbody className="text-[#eeeeee]">
              <tr className="h-[3px]" aria-hidden="true"><td colSpan="3" /></tr>
              {OBJECTS.map(([name, value, expand]) => (
                <tr key={name} className={`odd:h-[26px] even:h-[25px] ${name === "wdata" ? "bg-[#becdd9] text-[#111]" : ""}`}>
                  <td colSpan="2" className="p-0">
                    <div className="flex items-center pl-[6px]">
                      {expand ? <><Expander /><span className="w-[6px] border-t border-[#aaa]" /></> : <span className="w-[21px]" />}
                      <Diamond /><span className="ml-[7px]">{name}</span>
                    </div>
                  </td>
                  <td className="p-0 pl-[2px]">{value}</td>
                </tr>
              ))}
            </tbody>
          </table>
        </div>
        <div className={`ml-[7px] flex w-[22px] flex-col ${TRACK}`}>
          <ScrollButton dir="up" className="h-[25px]" />
          <div className={`h-[447px] ${THUMB}`} />
          <div className="flex-1" />
          <ScrollButton dir="down" className="h-[25px]" />
        </div>
      </div>
      <HScroll thumb="w-[154px]" className="mt-[5px] mr-[28px] ml-[3px]" />
    </section>
  );
}

function ProcessesPanel() {
  return (
    <section className={`mt-[10px] flex h-[191px] shrink-0 flex-col pt-[1px] ${PANEL}`}>
      <PanelTitle title="Processes (Active)" icon={<GearIcon />} />
      <div className="mr-[2px] ml-[3px] min-h-0 flex-1 overflow-hidden border-t-2 border-l-2 border-[#8c8c8c] bg-[#8aa2ff]">
        <table className="w-full table-fixed border-collapse text-[16px] leading-[20px] text-[#222]">
          <thead>
            <tr className="h-[25px] text-left">
              <th className={`w-[14px] pl-[1px] font-normal ${HEAD}`}><SortArrow /></th>
              <th className={`pl-[1px] font-normal ${HEAD}`}>Name</th>
              <th className={`w-[85px] overflow-hidden pl-[3px] font-normal whitespace-nowrap ${HEAD}`}>Type (filtered)</th>
            </tr>
          </thead>
          <tbody>
            <tr className="h-[3px]" aria-hidden="true"><td colSpan="3" /></tr>
            <tr className="h-[25px] bg-[#becdd9] text-[#111]">
              <td colSpan="2" className="p-0"><div className="flex items-center pl-[26px]"><Ball /><span className="ml-[8px]">#INITIAL#97</span></div></td>
              <td className="p-0 pl-[1px]">Initial</td>
            </tr>
          </tbody>
        </table>
      </div>
      <HScroll thumb="w-[116px]" className="mt-[5px] mb-[1px] ml-[3px]" />
    </section>
  );
}

const BAR = "h-[4px] shrink-0 border-t border-b border-t-[#999] border-b-[#999] bg-white";
const WROW = "odd:h-[25px] even:h-[26px] flex items-center";

function WavePanel() {
  return (
    <section className={`flex min-w-0 flex-1 flex-col overflow-hidden border-r-0 pt-[2px] pl-[4px] ${PANEL}`}>
      <PanelTitle className="-mr-[14px] h-[30px] pl-0" title="Wave - Default" icon={<WaveIcon />} />
      <div className="mb-[8px] flex min-h-0 flex-1 border-t-2 border-l-2 border-[#707070] bg-[#808080] text-[16px] text-white">
        <div className="flex w-[296px] shrink-0 flex-col">
          <div className="flex h-[28px] shrink-0 items-center pl-[12px]"><ShapesIcon /><div className="w-[4px]" /><Caret label="Object menu" /></div>
          <div className={BAR} />
          <div className="flex min-h-0 flex-1">
            <div className="w-[12px] shrink-0 bg-white" />
            <div className="min-w-0 flex-1">
              <ul className="pt-[3px]">
                {SIGNALS.map((s, i) => (
                  <li key={i} className={`${WROW} pl-[8px] whitespace-nowrap ${s.selected ? "bg-black" : ""}`}>
                    {s.bus ? <><Expander /><span className="w-[7px] border-t border-[#ddd]" /></> : <span className="w-[22px]" />}
                    <Diamond /><span className="ml-[8px]">{s.name}</span>
                  </li>
                ))}
              </ul>
              <div className="flex items-center pr-[6px] pl-[3px]">
                <svg width="5" height="12" viewBox="0 0 5 12" fill="none" className="-mt-[5px]" aria-hidden="true"><path d="M1 1v10l4-5z" stroke="#111" /></svg>
                <div className="-mt-[5px] h-[2px] flex-1 bg-[#333]" />
              </div>
            </div>
          </div>
          <div className={BAR} />
          <div className="flex h-[33px] shrink-0 items-center pr-[14px] pl-[13px]">
            <Svg w={15} h={16}><path d="M2 14L7 3l4 11M11 3h10l-5 11z" stroke="#444" strokeWidth="3" /><path d="M1 19h20" stroke="#7ab0f0" strokeWidth="4" /></Svg>
            <Svg w={18} h={18}><path d="M1 2h20v15H1z" fill="#a8c8f4" stroke="#5b8ee0" strokeWidth="2" /><path d="M4 8h12M4 12h8" stroke="#fff" strokeWidth="2" /><path d="M10 17l7 7V12z" fill="#7a9fe0" /></Svg>
            <AddBall s={18} />
            <span className="ml-auto">Now</span>
          </div>
          <div className="flex h-[26px] shrink-0">
            <div className="flex w-[72px] items-center justify-end gap-[2px]">
              <Svg w={18} h={20}><path d="M7 11V6c0-6 10-5 10 0" stroke="#aaa" strokeWidth="3" /><path d="M2 11h20v12H2z" fill="#f8c040" stroke="#d09020" /><path d="M12 15v4" stroke="#805000" strokeWidth="3" /></Svg>
              <Svg w={16} h={18}><path d="M3 20L14 9" stroke="#5b8ee8" strokeWidth="6" /><path d="M12 10l5-4-1-5M17 7l6 0" stroke="#bbb" strokeWidth="4" /></Svg>
              <RemoveBall />
            </div>
            <div className="flex-1 bg-white pr-[14px] text-right leading-[26px] text-[#111]">Cursor 1</div>
          </div>
          <div className={BAR} />
          <HScroll thumb="w-[216px]" className="mt-[2px] ml-[12px]" />
        </div>
        <div className="w-[5px] shrink-0 border-r-2 border-l border-[#8c8c8c] bg-white" />
        <div className="flex w-[149px] shrink-0 flex-col">
          <div className="h-[28px] shrink-0 pr-[7px] text-right leading-[28px]">Msgs</div>
          <div className={BAR} />
          <div className="min-h-0 flex-1">
            <ul className="pt-[3px]">
              {SIGNALS.map((s, i) => <li key={i} className={`${WROW} pl-[2px] ${s.selected ? "bg-black" : ""}`}>{s.value}</li>)}
            </ul>
            <div className="mr-[6px] ml-[3px] h-[2px] bg-[#333]" />
          </div>
          <div className={BAR} />
          <div className="h-[33px] shrink-0 pr-[14px] text-right leading-[33px]">230 ns</div>
          <div className="h-[26px] shrink-0 bg-white pr-[14px] text-right leading-[26px] text-[#111]">50 ns</div>
          <div className={BAR} />
          <HScroll off className="mt-[2px]" />
        </div>
        <div className="w-[5px] shrink-0 border-r border-l-2 border-[#8c8c8c] bg-white" />
        <div className="flex min-w-0 flex-1 flex-col bg-black">
          <div className="h-[28px] shrink-0">
            <svg className="block h-full w-full" aria-hidden="true"><path d={`M${tx(50)} 1V28`} stroke={CURSOR} strokeWidth="4" /></svg>
          </div>
          <div className={BAR} />
          <div className="min-h-0 flex-1 overflow-hidden"><WaveCanvas /></div>
          <div className={BAR} />
          <div className="h-[59px] shrink-0 overflow-hidden"><Ruler /></div>
          <div className={BAR} />
          <HScroll track="bg-[#c6c6c6]" className="border-t-2 border-[#808080] pr-[3px] pl-[2px] !h-[26px]" thumb="w-[1018px] shrink">
            <div className="absolute top-0 left-[246px] h-full w-[2px] bg-[#f4e27a]" />
          </HScroll>
        </div>
        <div className="w-[5px] shrink-0 border-r border-l border-[#8c8c8c] bg-white" />
        <div className="flex w-[15px] shrink-0 flex-col overflow-hidden">
          <div className="h-[28px] shrink-0" />
          <div className={BAR} />
          <div className={`flex min-h-0 w-[23px] flex-1 flex-col ${TRACK}`}>
            <ScrollButton dir="up" className="h-[24px]" />
            <div className="h-[120px] bg-[#efefef]" />
            <div className="h-[24px] bg-white" />
            <div className="flex-1 border-b-2 border-[#888] bg-[#efefef]" />
            <ScrollButton dir="down" className="h-[24px]" />
          </div>
          <div className={BAR} />
          <div className="h-[59px] shrink-0" />
          <div className={BAR} />
          <div className="h-[26px] shrink-0" />
        </div>
      </div>
    </section>
  );
}

/* ---------- window ---------- */

function TitleBar() {
  return (
    <header className="flex h-[48px] shrink-0 items-center rounded-tl-[10px] border-t-2 border-l border-t-[#aaa] border-l-[#aaa] border-b border-b-[#ccc] bg-linear-to-r from-[#ecf4f8] from-70% to-[#eff3fb] pb-[2px] pl-[12px] text-[#1a1a1a]">
      <MLogo />
      <h1 className="ml-[6px] text-[17px]">ModelSim ALTERA STARTER EDITION 10.1d</h1>
      <div className="ml-auto flex gap-[54px] pr-[9px]">
        <button type="button" aria-label="Minimize"><svg width="16" height="16" viewBox="0 0 16 16" aria-hidden="true"><path d="M0 8h16" stroke="#000" strokeWidth="1.200" /></svg></button>
        <button type="button" aria-label="Maximize"><svg width="16" height="16" viewBox="0 0 16 16" fill="none" aria-hidden="true"><rect x="1" y="1" width="14" height="14" rx="1" stroke="#000" strokeWidth="1.600" /></svg></button>
        <button type="button" aria-label="Close"><svg width="16" height="16" viewBox="0 0 16 16" aria-hidden="true"><path d="M1 1l14 14M15 1L1 15" stroke="#000" strokeWidth="1.500" /></svg></button>
      </div>
    </header>
  );
}

function Toolbars() {
  return (
    <div className="shrink-0 overflow-hidden border-l-2 border-[#8c8c8c] bg-[#efefef] text-[16px] text-[#222]">
      <div className="flex h-[48px]">
        <Toolbar label="Standard">
          <Tool label="New"><DocIcon /></Tool><Caret /><Tool label="Open"><OpenIcon /></Tool><Tool label="Save"><SaveIcon /></Tool>
          <Tool label="Reload"><RefreshIcon /></Tool><Tool label="Print"><PrintIcon /></Tool><Sep />
          <Tool label="Cut"><CutIcon /></Tool><Tool label="Copy"><CopyIcon /></Tool><Tool label="Paste"><PasteIcon /></Tool>
          <Tool label="Undo"><UndoIcon /></Tool><Tool label="Redo"><RedoIcon /></Tool><Sep />
          <Tool label="Add"><AddBall s={24} /></Tool><Caret /><Tool label="Find"><FindIcon /></Tool>
          <Tool label="Collapse all"><TreeIcon /></Tool><Tool label="ModelSim"><MLogo /></Tool>
          <div className="w-[2px]" />
        </Toolbar>
        <Toolbar label="Wave edit" className="ml-[153px]">
          <Pressed label="Select mode"><PointerIcon /></Pressed><Raised label="Zoom mode"><ZoomBoxIcon /></Raised>
          <Raised label="Pan mode"><PanIcon /></Raised><Raised label="Edit mode"><EditWaveIcon /></Raised><Sep />
          <Tool label="Stop drawing"><TrafficIcon /></Tool>
        </Toolbar>
        <Toolbar label="Compile" className="ml-[2px]">
          <Tool label="Compile"><CompileIcon /></Tool><Tool label="Compile all"><CompileAllIcon /></Tool>
          <Tool label="Simulate"><SimIcon /></Tool><Tool label="Break"><BreakIcon /></Tool>
        </Toolbar>
        <Toolbar label="Simulate" className="ml-[2px]">
          <Raised label="Environment"><CascadeIcon /></Raised><Tool label="Up"><UpArrow /></Tool><Tool label="Back"><LeftArrow /></Tool>
          <Tool label="Forward"><RightArrowOff /></Tool><Sep /><Tool label="Restart"><RestartIcon /></Tool>
          <input aria-label="Run length" defaultValue="100 ps" className="ml-[6px] h-[28px] w-[89px] border-t-2 border-l-2 border-[#8c8c8c] bg-white pr-[2px] text-right font-['Liberation_Mono',monospace] text-[17px] outline-none" />
          <div className="mr-[6px] ml-[3px] flex flex-col">
            {["M0 6h10L5 0z", "M0 0h10L5 6z"].map((d, i) => (
              <button key={d} type="button" aria-label={i ? "Decrease" : "Increase"} className="flex h-[14px] w-[20px] items-center justify-center border-t border-r-2 border-b-2 border-l border-t-white border-l-white border-r-[#8c8c8c] border-b-[#8c8c8c]"><svg width="10" height="6" viewBox="0 0 10 6" aria-hidden="true"><path d={d} fill="#000" /></svg></button>
            ))}
          </div>
          <Tool label="Run"><RunIcon /></Tool><Tool label="Continue run"><ContinueIcon /></Tool><Tool label="Run all"><RunAllIcon /></Tool>
          <Tool label="Break run"><BreakIcon /></Tool><Tool label="Stop"><StopIcon /></Tool><Sep />
          <Raised label="Performance profiling"><ProfileIcon /></Raised><Raised label="Memory profiling"><ProfileIcon m /></Raised>
          <Tool label="Edit breakpoints"><HandIcon /></Tool>
          <div className="w-[2px]" />
        </Toolbar>
        <Toolbar label="Step" className="ml-[2px]">
          <Tool label="Step into"><StepDown /></Tool><Tool label="Step over"><StepOver /></Tool><Tool label="Step out"><StepUp /></Tool><Sep />
          <Tool label="Step into current"><StepDown bars /></Tool><Tool label="Step over current"><StepOver bars /></Tool><Tool label="Step out current"><StepUp bars /></Tool>
        </Toolbar>
      </div>
      <div className="flex h-[48px]">
        <Toolbar label="Layout">
          <span className="mr-[8px] mb-[5px] ml-[7px]">Layout</span>
          <Combo label="Layout" value="Simulate" width="w-[184px]" />
          <div className="w-[9px]" />
        </Toolbar>
      </div>
      <div className="flex h-[48px]">
        <Toolbar label="Column layout">
          <span className="mr-[6px] mb-[5px] ml-[7px]">ColumnLayout</span>
          <Combo label="Column layout" value="AllColumns" width="w-[320px]" />
          <div className="w-[7px]" />
        </Toolbar>
        <Toolbar label="Bookmarks" className="ml-[2px]">
          <Tool label="Add bookmark"><FlagIcon kind="add" /></Tool><Caret /><Tool label="Delete bookmark"><FlagIcon kind="remove" /></Tool><Caret />
          <Tool label="Manage bookmarks"><FlagIcon kind="edit" /></Tool><Tool label="Save bookmarks"><FlagIcon kind="save" /></Tool><Caret />
          <Tool label="Jump to bookmark"><FlagIcon kind="go" /></Tool>
        </Toolbar>
        <Toolbar label="Object filter" className="ml-[2px]">
          <Pressed label="Inputs"><GlyphI /></Pressed><Pressed label="Outputs"><GlyphO /></Pressed><Pressed label="Inouts"><GlyphIO /></Pressed>
          <Pressed label="Internal"><GlyphBox /></Pressed><Raised label="All"><GlyphAll /></Raised><Tool label="Customize"><BrushIcon /></Tool>
        </Toolbar>
        <Toolbar label="Wave cursor" className="ml-[402px]">
          <Tool label="Insert cursor"><CursorAdd plus /></Tool><Tool label="Delete cursor"><CursorAdd /></Tool>
          <Tool label="Previous transition"><EdgeIcon d="M1 2h8v20h14" arrow="M12 10h11M16 6l-4 4 4 4" /></Tool>
          <Tool label="Next transition"><EdgeIcon d="M2 22h13V2h8" arrow="M1 10h11M8 6l4 4-4 4" /></Tool>
          <Tool label="Previous falling edge"><EdgeIcon d="M1 2h8v20h14" arrow="M6 10h6M9 7v7M12 16h9" /></Tool>
          <Tool label="Next falling edge"><EdgeIcon d="M1 2h12v20h10" arrow="M12 7v7M3 17h8M7 15v4" /></Tool>
          <Tool label="Previous rising edge"><EdgeIcon d="M2 22h8V2h12" arrow="M9 7v7M12 17h8M14 15v4" /></Tool>
          <Tool label="Next rising edge"><EdgeIcon d="M2 22h14V2h7" arrow="M15 7v7M6 17h8M11 15v4" /></Tool>
        </Toolbar>
      </div>
      <div className="flex h-[48px]">
        <Toolbar label="Find">
          <Tool label="Contract"><JoinIcon kind="in" /></Tool><Caret small /><Tool label="Expand"><JoinIcon kind="out" /></Tool><Caret small />
          <Tool label="Trace"><JoinIcon kind="mid" /></Tool><Sep />
          <span className="mr-[8px] mb-[5px] ml-[7px] w-[57px] text-[#888]">Search:</span>
          <Combo off label="Search" value="" width="w-[173px]" />
          <div className="ml-[5px] flex"><Narrow label="Find previous"><FindOff /></Narrow><Narrow label="Find next"><FindOff flip /></Narrow></div>
          <div className="w-[3px]" />
          <Tool label="Search options"><WrenchOff /></Tool>
          <div className="w-[4px]" />
        </Toolbar>
        <Toolbar label="Zoom" className="ml-[3px]">
          {["in", "out", "fit", "cursor", "box"].map((k) => <Tool key={k} label={`Zoom ${k}`}><LensIcon kind={k} /></Tool>)}
        </Toolbar>
        <Toolbar label="Expanded time" className="ml-[3px]">
          <Pressed label="Expanded time off"><WaveBtn kind="line" /></Pressed><Raised label="Deltas mode"><WaveBtn kind="bar" /></Raised>
          <Raised label="Events mode"><WaveBtn kind="full" /></Raised><Sep />
          {["blue", "half", "edge", "edgey"].map((k) => <Tool key={k} label={`Expand ${k}`}><WaveBtn kind={k} /></Tool>)}
        </Toolbar>
      </div>
    </div>
  );
}

export default function App() {
  return (
    <div className="flex h-screen flex-col overflow-hidden bg-[#bdbdbd] font-['DejaVu_Sans_Condensed','Noto_Sans',sans-serif] leading-[20px]">
      <Defs />
      <div className="shrink-0 font-['Noto_Sans',sans-serif]">
        <TitleBar />
        <nav aria-label="Main menu" className="flex h-[30px] items-center gap-[22px] border-b border-b-[#8c8c8c] bg-white pb-[3px] pl-[12px] text-[18px] text-[#222]">
          {MENUS.map((m) => <button key={m} type="button">{m}</button>)}
        </nav>
      </div>
      <Toolbars />
      <main className="flex min-h-0 flex-1 border-l-2 border-[#8c8c8c] bg-[#cacaca] pt-[1px] pb-[11px]">
        <InstancePanel />
        <div className="ml-[10px] flex w-[312px] shrink-0 flex-col">
          <ObjectsPanel />
          <ProcessesPanel />
        </div>
        <div className="w-[11px] shrink-0" />
        <WavePanel />
      </main>
      <footer className="h-[9px] shrink-0 overflow-hidden border-t-2 border-[#999] bg-[#efefef] pt-[2px] pl-[7px]">
        <svg width="20" height="20" viewBox="0 0 20 20" aria-hidden="true"><circle cx="10" cy="10" r="9" fill="#aaa" stroke="#666" strokeWidth="2" /></svg>
      </footer>
    </div>
  );
}
